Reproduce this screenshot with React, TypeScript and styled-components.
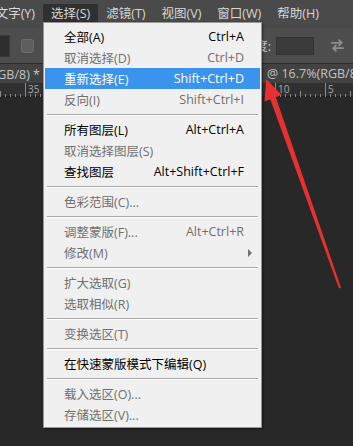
import styled, { createGlobalStyle } from "styled-components";

const GlobalStyle = createGlobalStyle`
  html, body {
    margin: 0;
    padding: 0;
    background: #282828;
  }
  * {
    box-sizing: border-box;
  }
`;

const FONT = `"Open Sans", "Noto Sans CJK SC", sans-serif`;

type MenuEntry =
  | { sep: true }
  | {
      sep?: false;
      label: string;
      shortcut?: string;
      disabled?: boolean;
      active?: boolean;
      submenu?: boolean;
    };

const entries: MenuEntry[] = [
  { label: "全部(A)", shortcut: "Ctrl+A" },
  { label: "取消选择(D)", shortcut: "Ctrl+D", disabled: true },
  { label: "重新选择(E)", shortcut: "Shift+Ctrl+D", active: true },
  { label: "反向(I)", shortcut: "Shift+Ctrl+I", disabled: true },
  { sep: true },
  { label: "所有图层(L)", shortcut: "Alt+Ctrl+A" },
  { label: "取消选择图层(S)", disabled: true },
  { label: "查找图层", shortcut: "Alt+Shift+Ctrl+F" },
  { sep: true },
  { label: "色彩范围(C)...", disabled: true },
  { sep: true },
  { label: "调整蒙版(F)...", shortcut: "Alt+Ctrl+R", disabled: true },
  { label: "修改(M)", disabled: true, submenu: true },
  { sep: true },
  { label: "扩大选取(G)", disabled: true },
  { label: "选取相似(R)", disabled: true },
  { sep: true },
  { label: "变换选区(T)", disabled: true },
  { sep: true },
  { label: "在快速蒙版模式下编辑(Q)" },
  { sep: true },
  { label: "载入选区(O)...", disabled: true },
  { label: "存储选区(V)...", disabled: true },
];

const topMenus = ["选择(S)", "滤镜(T)", "视图(V)", "窗口(W)", "帮助(H)"];

const rulerLabels = ["35", "30", "25", "20", "15", "10", "5"];

const App = () => {
  return (
    <>
      <GlobalStyle />
      <Screen>
        <MenuBar>
          <ClippedTop>
            <TopItem>文字(Y)</TopItem>
          </ClippedTop>
          {topMenus.map((m, i) => (
            <TopItem key={m} $open={i === 0}>
              {m}
            </TopItem>
          ))}
        </MenuBar>

        <OptionsBar>
          <ToolPreset />
          <CheckBox />
          <OptionsRight>
            <OptLabel>宽度:</OptLabel>
            <OptInput />
            <SwapIcon viewBox="0 0 16 14">
              <path d="M2 4.5h10M9 1.5l3 3-3 3" fill="none" stroke="#8e8e8e" strokeWidth="1.6" />
              <path d="M14 9.5H4M7 6.5l-3 3 3 3" fill="none" stroke="#8e8e8e" strokeWidth="1.6" />
            </SwapIcon>
          </OptionsRight>
        </OptionsBar>

        <TabBar>
          <DocTab $width={50} $alignEnd>
            未标题-1 @ 16.7%(RGB/8) *
          </DocTab>
          <DocTab $width={91}>@ 16.7%(RGB/8) *</DocTab>
        </TabBar>

        <Ruler>
          <svg width="353" height="14" viewBox="0 0 353 14">
            {Array.from({ length: 72 }).map((_, i) => {
              const x = i * 5 + 0.5;
              const major = (i * 5 - 25) % 50 === 0;
              const half = (i * 5) % 50 === 0;
              const h = major ? 14 : half ? 6 : 3;
              return (
                <line
                  key={i}
                  x1={x}
                  x2={x}
                  y1={14 - h}
                  y2={14}
                  stroke="#8a8a8a"
                  strokeWidth="1"
                />
              );
            })}
            {rulerLabels.map((t, i) => (
              <RulerText key={t} x={28 + i * 50} y={10}>
                {t}
              </RulerText>
            ))}
          </svg>
        </Ruler>

        <Canvas />

        <Dropdown>
          {entries.map((e, i) =>
            e.sep ? (
              <Separator key={i} />
            ) : (
              <Row key={i} $active={e.active} $disabled={e.disabled}>
                <span>{e.label}</span>
                <Shortcut>{e.shortcut}</Shortcut>
                <ArrowCell>{e.submenu && <SubArrow />}</ArrowCell>
              </Row>
            )
          )}
        </Dropdown>

        <Pointer viewBox="0 0 353 446">
          <polygon points="266.3,79 264.5,101.5 270.3,99.2 339,288.5 341,287.8 275.8,97.2 281.5,95" fill="#e6322e" />
        </Pointer>
      </Screen>
    </>
  );
};

const Screen = styled.div`
  position: relative;
  width: 353px;
  height: 446px;
  overflow: hidden;
  display: flex;
  flex-direction: column;
  background: #282828;
  font-family: ${FONT};
`;

const MenuBar = styled.div`
  height: 28px;
  flex: none;
  display: flex;
  align-items: flex-start;
  padding-top: 4px;
  background: #4a4a4a;
`;

const ClippedTop = styled.div`
  width: 43px;
  flex: none;
  display: flex;
  justify-content: flex-end;
  overflow: hidden;
`;

const TopItem = styled.div<{ $open?: boolean }>`
  flex: none;
  height: 20px;
  line-height: 20px;
  padding: 0 8px;
  font-size: 12.5px;
  color: #d8d8d8;
  white-space: nowrap;
  background: ${(p) => (p.$open ? "#303030" : "transparent")};
`;

const OptionsBar = styled.div`
  height: 36px;
  flex: none;
  display: flex;
  align-items: center;
  background: #4d4d4d;
  border-bottom: 1px solid #2c2c2c;
`;

const ToolPreset = styled.div`
  width: 10px;
  height: 22px;
  background: #2e2e2e;
  border: 1px solid #3a3a3a;
  border-left: none;
`;

const CheckBox = styled.div`
  width: 13px;
  height: 14px;
  margin-left: 11px;
  border-radius: 3px;
  background: #5e5e5e;
  border: 1px solid #6c6c6c;
`;

const OptionsRight = styled.div`
  margin-left: auto;
  display: flex;
  align-items: center;
  gap: 5px;
  padding-right: 7px;
`;

const OptLabel = styled.span`
  font-size: 12.5px;
  color: #cfcfcf;
`;

const OptInput = styled.div`
  width: 38px;
  height: 18px;
  background: #3b3b3b;
  border: 1px solid #333;
  margin-right: 10px;
`;

const SwapIcon = styled.svg`
  width: 17px;
  height: 15px;
`;

const TabBar = styled.div`
  height: 19px;
  flex: none;
  display: flex;
  justify-content: space-between;
  background: #333333;
  overflow: hidden;
`;

const DocTab = styled.div<{ $width: number; $alignEnd?: boolean }>`
  flex: none;
  width: ${(p) => p.$width}px;
  display: flex;
  justify-content: ${(p) => (p.$alignEnd ? "flex-end" : "flex-start")};
  align-items: center;
  padding: ${(p) => (p.$alignEnd ? "0 10px 0 0" : "0 0 0 5px")};
  overflow: hidden;
  white-space: nowrap;
  font-size: 12.5px;
  color: #c4c4c4;
  background: #424242;
`;

const Ruler = styled.div`
  height: 14px;
  flex: none;
  background: #303030;
  border-bottom: 1px solid #1f1f1f;
  svg {
    display: block;
  }
`;

const RulerText = styled.text`
  font-family: ${FONT};
  font-size: 10px;
  fill: #a8a8a8;
`;

const Canvas = styled.div`
  flex: 1;
  background: #282828;
`;

const Dropdown = styled.div`
  position: absolute;
  top: 22px;
  left: 43px;
  width: 219px;
  padding: 3px 0 2px;
  background: #f0f0f0;
  border: 1px solid #979797;
  box-shadow: 1px 1px 2px rgba(0, 0, 0, 0.45);
  font-family: ${FONT};
  font-size: 12.5px;
`;

const Row = styled.div<{ $active?: boolean; $disabled?: boolean }>`
  height: 21px;
  margin: 0 1px;
  display: grid;
  grid-template-columns: 1fr auto 16px;
  align-items: center;
  padding-left: 19px;
  white-space: nowrap;
  color: ${(p) => (p.$active ? "#ffffff" : p.$disabled ? "#6f6f6f" : "#000000")};
  background: ${(p) => (p.$active ? "#3a93ec" : "transparent")};
`;

const Shortcut = styled.span`
  text-align: right;
`;

const ArrowCell = styled.span`
  display: flex;
  align-items: center;
  padding-left: 4px;
`;

const SubArrow = styled.span`
  width: 0;
  height: 0;
  border-top: 4px solid transparent;
  border-bottom: 4px solid transparent;
  border-left: 4px solid #6f6f6f;
`;

const Separator = styled.div`
  height: 9px;
  margin: 0 3px;
  display: flex;
  align-items: center;
  &::before {
    content: "";
    flex: 1;
    height: 1px;
    background: #a9a9a9;
    box-shadow: 0 1px 0 #ffffff;
  }
`;

const Pointer = styled.svg`
  position: absolute;
  inset: 0;
  width: 353px;
  height: 446px;
  pointer-events: none;
`;

export default App;
